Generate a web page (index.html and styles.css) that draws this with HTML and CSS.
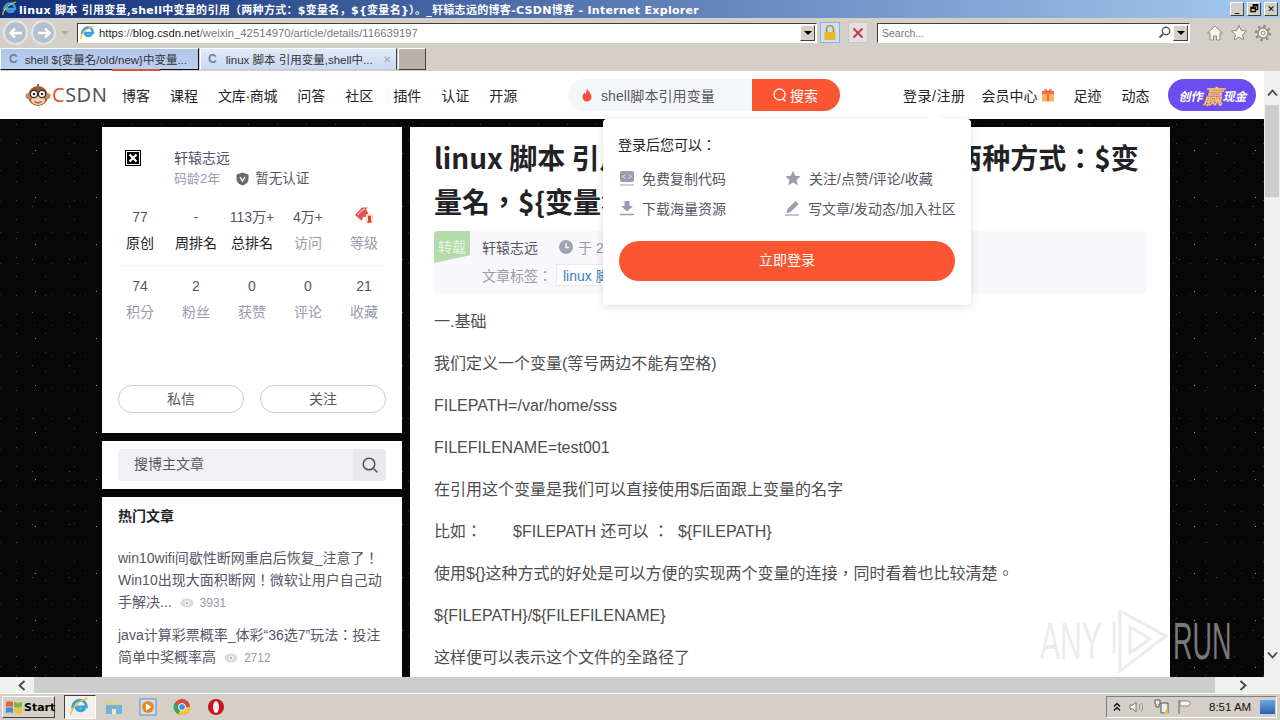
FILE: index.html
```html
<!DOCTYPE html>
<html>
<head>
  <meta charset="UTF-8" />
  <title>linux 脚本 引用变量 - CSDN博客</title>
  <link rel="stylesheet" href="styles.css">
</head>
<body>

  <!-- Window title -->
  <div class="titlebar">
    <svg class="ie-logo" width="16" height="16" viewBox="0 0 16 16"><path d="M2 9c0-4 3-6.500 6-6.500 3 0 5 2.500 5 5.500H5c0 3 4 4 7 1.500" fill="none" stroke="#3a9fe0" stroke-width="2.400"/><path d="M1 14C0 11 6 3 14 1" fill="none" stroke="#f2c230" stroke-width="1.200"/></svg>
    <span class="titlebar-text">linux 脚本 引用变量,shell中变量的引用（两种方式：$变量名，${变量名}）。_轩辕志远的博客-CSDN博客 - Internet Explorer</span>
    <div class="win-btns">
      <span class="win-btn">_</span><span class="win-btn">🗗</span><span class="win-btn">✕</span>
    </div>
  </div>

  <!-- Address row -->
  <div class="addressbar">
    <div class="nav-round"><svg width="14" height="12" viewBox="0 0 14 12"><path d="M13 6H2M6 1.500 1.500 6 6 10.500" fill="none" stroke="#fff" stroke-width="2.400"/></svg></div>
    <div class="nav-round"><svg width="14" height="12" viewBox="0 0 14 12"><path d="M1 6h11M8 1.500 12.500 6 8 10.500" fill="none" stroke="#fff" stroke-width="2.400"/></svg></div>
    <span class="nav-drop"></span>
    <div class="url-box">
      <svg width="16" height="16" viewBox="0 0 16 16"><path d="M2 9c0-4 3-6.500 6-6.500 3 0 5 2.500 5 5.500H5c0 3 4 4 7 1.500" fill="none" stroke="#3a9fe0" stroke-width="2.400"/><path d="M1 14C0 11 6 3 14 1" fill="none" stroke="#f2c230" stroke-width="1.200"/></svg>
      <span class="url-text"><b>https</b>://<b>blog.csdn.net</b>/weixin_42514970/article/details/116639197</span>
      <span class="combo-arrow"></span>
    </div>
    <div class="lock-btn"><svg width="14" height="16" viewBox="0 0 14 16"><path d="M3.500 7V4a3.500 3.500 0 0 1 7 0v3" fill="none" stroke="#b98a20" stroke-width="1.600"/><rect x="1.500" y="7" width="11" height="8" fill="#e8b830"/></svg></div>
    <div class="stop-btn"><svg width="12" height="12" viewBox="0 0 12 12"><path d="M1.500 1.500l9 9M10.500 1.500l-9 9" stroke="#c04048" stroke-width="2"/></svg></div>
    <div class="search-box">
      <span>Search...</span>
      <svg width="13" height="13" viewBox="0 0 13 13"><circle cx="8" cy="5" r="3.700" fill="none" stroke="#555" stroke-width="1.400"/><path d="M5 8 1.500 11.500" stroke="#555" stroke-width="1.800"/></svg>
      <span class="combo-arrow"></span>
    </div>
    <div class="tool-icons">
      <svg width="18" height="18" viewBox="0 0 18 18"><path d="M9 2 1.500 9H4v7h3.500v-4h3v4H14V9h2.500z" fill="#f6f4f0" stroke="#8b8b85"/></svg>
      <svg width="18" height="18" viewBox="0 0 18 18"><path d="M9 1.500l2.300 5 5.200.5-4 3.600 1.200 5.400L9 13.200 4.300 16l1.200-5.400-4-3.600 5.200-.5z" fill="#f6f4f0" stroke="#8b8b85"/></svg>
      <svg width="18" height="18" viewBox="0 0 18 18"><circle cx="9" cy="9" r="5" fill="#f6f4f0" stroke="#8b8b85" stroke-width="1.500"/><circle cx="9" cy="9" r="7" fill="none" stroke="#8b8b85" stroke-width="2.400" stroke-dasharray="2.500 3"/><circle cx="9" cy="9" r="2" fill="none" stroke="#8b8b85"/></svg>
    </div>
  </div>

  <!-- Tabs -->
  <div class="tabstrip">
    <div class="tab">
      <span class="tab-spin">C</span>
      <span class="tab-label">shell ${变量名/old/new}中变量...</span>
    </div>
    <div class="tab tab-active">
      <span class="tab-spin">C</span>
      <span class="tab-label">linux 脚本 引用变量,shell中...</span>
      <span class="tab-close">✕</span>
    </div>
    <div class="tab-new"></div>
    <span class="tab-progress"></span>
  </div>

  <!-- Browser viewport -->
  <div class="viewport">
    <div class="page">

      <div class="site-header">
        <div class="logo">
          <svg width="26" height="24" viewBox="0 0 26 24">
            <circle cx="13" cy="13" r="10" fill="#9c5a36"/>
            <circle cx="3.500" cy="13" r="3" fill="#c98a5c"/>
            <circle cx="22.500" cy="13" r="3" fill="#c98a5c"/>
            <ellipse cx="13" cy="17" rx="7" ry="5" fill="#f2cfa8"/>
            <circle cx="9" cy="11" r="3.600" fill="#fff" stroke="#3c2a20" stroke-width="1.300"/>
            <circle cx="17" cy="11" r="3.600" fill="#fff" stroke="#3c2a20" stroke-width="1.300"/>
            <circle cx="9" cy="11" r="1.300" fill="#3c2a20"/>
            <circle cx="17" cy="11" r="1.300" fill="#3c2a20"/>
            <path d="M9.500 18.500c2 1.500 5 1.500 7 0" fill="none" stroke="#a0482c" stroke-width="1.200"/>
            <path d="M13 3V1" stroke="#9c5a36" stroke-width="2"/>
          </svg>
          <span class="logo-text"><span class="logo-c">C</span>SDN</span>
        </div>
        <nav class="site-nav">
          <a>博客</a><a>课程</a><a class="nav-shop">文库·商城</a><a>问答</a><a>社区</a><a>插件</a><a>认证</a><a>开源</a>
        </nav>
        <div class="site-search">
          <div class="site-search-input">
            <svg width="12" height="14" viewBox="0 0 12 14"><path d="M6 .5c.5 2.500 4.500 4.500 4.500 8.500A4.500 4.500 0 0 1 6 13.500 4.500 4.500 0 0 1 1.500 9C1.500 7 2.500 5.500 3.500 4.500c.3 1 .7 1.500 1.200 1.800C5.200 4.500 5.500 2.500 6 .5z" fill="#f0503c"/></svg>
            <span>shell脚本引用变量</span>
          </div>
          <div class="site-search-btn">
            <svg width="16" height="16" viewBox="0 0 16 16"><circle cx="7.500" cy="7.500" r="5.500" fill="none" stroke="#fff" stroke-width="1.300"/><path d="M11 11.500l2.500 3" stroke="#fff" stroke-width="1.300"/></svg>
            <span>搜索</span>
          </div>
        </div>
        <div class="site-right">
          <a class="r-login">登录/注册</a>
          <a class="r-vip">会员中心
            <svg width="14" height="14" viewBox="0 0 14 14"><rect x="1" y="5" width="12" height="8.500" fill="#f5b35a"/><rect x="1" y="3" width="12" height="3" fill="#ef6f4c"/><rect x="6" y="3" width="2" height="10.500" fill="#ef6f4c"/><path d="M7 3C5 0 2.500 .5 3.500 3zM7 3c2-3 4.500-2.500 3.500 0z" fill="#ef6f4c"/></svg>
          </a>
          <a class="r-foot">足迹</a>
          <a class="r-news">动态</a>
          <div class="r-pill"><i>创作</i><i class="r-pill-win">赢</i><i>现金</i></div>
        </div>
      </div>

      <div class="page-body">
        <aside class="sidebar">
          <section class="card profile">
            <div class="profile-top">
              <span class="broken-img"><svg width="10" height="10" viewBox="0 0 10 10"><path d="M1.500 1.500l7 7M8.500 1.500l-7 7" stroke="#fff" stroke-width="2.200"/></svg></span>
              <div class="profile-info">
                <div class="profile-name">轩辕志远</div>
                <div class="profile-sub">
                  <span class="profile-age">码龄2年</span>
                  <svg width="13" height="14" viewBox="0 0 13 14"><path d="M6.500 .5 12.500 2.500V7c0 3.500-3 5.500-6 6.500-3-1-6-3-6-6.500V2.500z" fill="#6b6b6b"/><path d="M4 5l2.500 4L9 5" fill="none" stroke="#fff" stroke-width="1.300"/></svg>
                  <span class="profile-cert">暂无认证</span>
                </div>
              </div>
            </div>
            <div class="stats stats-first">
              <div class="stat"><b>77</b><span class="dark">原创</span></div>
              <div class="stat"><b>-</b><span class="dark">周排名</span></div>
              <div class="stat"><b>113万+</b><span class="dark">总排名</span></div>
              <div class="stat"><b>4万+</b><span>访问</span></div>
              <div class="stat">
                <b class="level-icon"><svg width="20" height="18" viewBox="0 0 20 18"><path d="M1 9 8 1.500h6L12 3l3 6-2 2H9l-1 4z" fill="#ec5050"/><path d="M4 9c2-3 4-5 7-6" fill="none" stroke="#fff" stroke-width="1"/><rect x="12" y="8" width="7" height="9" fill="#fbe3c8"/><path d="M14.500 10h2v6h-2zM13 16h5" stroke="#d8452c" stroke-width="1" fill="#d8452c"/></svg></b>
                <span>等级</span>
              </div>
            </div>
            <div class="stats-line"></div>
            <div class="stats stats-second">
              <div class="stat"><b>74</b><span>积分</span></div>
              <div class="stat"><b>2</b><span>粉丝</span></div>
              <div class="stat"><b>0</b><span>获赞</span></div>
              <div class="stat"><b>0</b><span>评论</span></div>
              <div class="stat"><b>21</b><span>收藏</span></div>
            </div>
            <div class="profile-btns">
              <a>私信</a><a>关注</a>
            </div>
          </section>

          <section class="card blog-search">
            <div class="blog-search-box">
              <span class="blog-search-text">搜博主文章</span>
              <span class="blog-search-btn"><svg width="18" height="18" viewBox="0 0 18 18"><circle cx="8" cy="8" r="5.800" fill="none" stroke="#555" stroke-width="1.500"/><path d="M12.500 12.500l4 4" stroke="#555" stroke-width="1.500"/></svg></span>
            </div>
          </section>

          <section class="card hot">
            <h4>热门文章</h4>
            <div class="hot-item">win10wifi间歇性断网重启后恢复_注意了！Win10出现大面积断网！微软让用户自己动手解决... <span class="hot-views"><svg width="14" height="10" viewBox="0 0 14 10"><ellipse cx="7" cy="5" rx="6.500" ry="4.500" fill="#d8dbe2"/><circle cx="7" cy="5" r="2.400" fill="#fff"/><circle cx="7" cy="5" r="1.300" fill="#a9afbd"/></svg>3931</span></div>
            <div class="hot-item">java计算彩票概率_体彩“36选7”玩法：投注简单中奖概率高 <span class="hot-views"><svg width="14" height="10" viewBox="0 0 14 10"><ellipse cx="7" cy="5" rx="6.500" ry="4.500" fill="#d8dbe2"/><circle cx="7" cy="5" r="2.400" fill="#fff"/><circle cx="7" cy="5" r="1.300" fill="#a9afbd"/></svg>2712</span></div>
          </section>
        </aside>

        <main class="article">
          <h1>linux 脚本 引用变量,shell中变量的引用（两种方式：$变量名，${变量名}）。</h1>
          <div class="article-meta">
            <span class="badge">转载</span>
            <div class="meta-line">
              <span class="meta-author">轩辕志远</span>
              <svg width="14" height="14" viewBox="0 0 14 14"><circle cx="7" cy="7" r="7" fill="#a0a3b5"/><path d="M7 3v4.500h3" fill="none" stroke="#fff" stroke-width="1.300"/></svg>
              <span class="meta-date">于 2021-05-11 发布</span>
            </div>
            <div class="meta-line">
              <span class="meta-label">文章标签：</span>
              <span class="meta-tag">linux 脚本</span>
            </div>
          </div>
          <p>一.基础</p>
          <p>我们定义一个变量(等号两边不能有空格)</p>
          <p>FILEPATH=/var/home/sss</p>
          <p>FILEFILENAME=test001</p>
          <p>在引用这个变量是我们可以直接使用$后面跟上变量的名字</p>
          <p>比如：&nbsp; &nbsp; &nbsp; &nbsp;$FILEPATH 还可以 ：&nbsp; ${FILEPATH}</p>
          <p>使用${}这种方式的好处是可以方便的实现两个变量的连接，同时看着也比较清楚。</p>
          <p>${FILEPATH}/${FILEFILENAME}</p>
          <p>这样便可以表示这个文件的全路径了</p>
        </main>
      </div>

      <!-- Login popup under the header -->
      <div class="login-pop">
        <div class="login-pop-title">登录后您可以：</div>
        <div class="login-pop-grid">
          <div class="pop-item">
            <svg width="14" height="16" viewBox="0 0 14 16"><rect x="0" y="1" width="14" height="11" rx="2" fill="#9a9db0"/><path d="M0 15h14" stroke="#9a9db0"/><path d="M5 4.500 3 6.500l2 2M9 4.500l2 2-2 2" fill="none" stroke="#fff"/></svg>
            <span>免费复制代码</span>
          </div>
          <div class="pop-item">
            <svg width="16" height="16" viewBox="0 0 16 16"><path d="M8 .8l2.300 4.900 5.200.6-3.900 3.600 1.100 5.300L8 12.500l-4.700 2.700 1.100-5.300L.5 6.300l5.200-.6z" fill="#9a9db0"/></svg>
            <span>关注/点赞/评论/收藏</span>
          </div>
          <div class="pop-item">
            <svg width="14" height="16" viewBox="0 0 14 16"><path d="M4.500 1h5v5H13L7 11.500 1 6h3.500z" fill="#9a9db0"/><path d="M0 14.500h14" stroke="#9a9db0" stroke-width="1.500"/></svg>
            <span>下载海量资源</span>
          </div>
          <div class="pop-item pop-write">
            <svg width="14" height="16" viewBox="0 0 14 16"><path d="M10.500 1 13.500 4 5.500 12 1.500 13.500 2.500 9z" fill="#9a9db0"/><path d="M0 15h14" stroke="#9a9db0" stroke-width="1.200"/></svg>
            <span>写文章/发动态/加入社区</span>
          </div>
        </div>
        <div class="login-pop-btn">立即登录</div>
      </div>
    </div>

    <div class="v-scroll">
      <span class="v-arrow"><svg width="11" height="8" viewBox="0 0 11 8"><path d="M1 6.500l4.500-5 4.500 5" fill="none" stroke="#444" stroke-width="1.800"/></svg></span>
      <span class="v-thumb"></span>
      <span class="v-arrow v-arrow-down"><svg width="11" height="8" viewBox="0 0 11 8"><path d="M1 1.500l4.500 5 4.500-5" fill="none" stroke="#444" stroke-width="1.800"/></svg></span>
    </div>
  </div>

  <div class="h-scroll">
    <span class="h-arrow h-left"><svg width="8" height="11" viewBox="0 0 8 11"><path d="M6.500 1l-5 4.500 5 4.500" fill="none" stroke="#444" stroke-width="1.800"/></svg></span>
    <span class="h-thumb"></span>
    <span class="h-arrow h-right"><svg width="8" height="11" viewBox="0 0 8 11"><path d="M1.500 1l5 4.500-5 4.500" fill="none" stroke="#444" stroke-width="1.800"/></svg></span>
  </div>

  <!-- Taskbar -->
  <div class="taskbar">
    <div class="start-btn">
      <svg width="18" height="16" viewBox="0 0 18 16"><path d="M1 3c2-1 4-1 7 0v5C5 7 3 7 1 8z" fill="#e8602c"/><path d="M9 3c3 1 5 1 8 0v5c-3 1-5 1-8 0z" fill="#7eb73e"/><path d="M1 9c2-1 4-1 7 0v5c-3-1-5-1-7 0z" fill="#3f8fd8"/><path d="M9 9c3 1 5 1 8 0v5c-3 1-5 1-8 0z" fill="#f2c230"/></svg>
      <span>Start</span>
    </div>
    <div class="task-item task-item-on">
      <svg width="20" height="20" viewBox="0 0 16 16"><path d="M2 9c0-4 3-6.500 6-6.500 3 0 5 2.500 5 5.500H5c0 3 4 4 7 1.500" fill="none" stroke="#3a9fe0" stroke-width="2.400"/><path d="M1 14C0 11 6 3 14 1" fill="none" stroke="#f2c230" stroke-width="1.200"/></svg>
    </div>
    <div class="task-item">
      <svg width="18" height="18" viewBox="0 0 18 18"><path d="M2 3h5l2 2h6v3H2z" fill="#e6cf7e"/><path d="M1 7h16v9H1z" fill="#72b4d8"/><path d="M7 16v-5h4v5" fill="#f4e9c0"/></svg>
    </div>
    <div class="task-item">
      <svg width="18" height="18" viewBox="0 0 18 18"><rect x="1" y="1" width="16" height="16" fill="#cfe2f5" stroke="#5a8fc8"/><circle cx="9" cy="9" r="6" fill="#ee8a1c"/><path d="M7 5.500 12.500 9 7 12.500z" fill="#fff"/></svg>
    </div>
    <div class="task-item">
      <svg width="18" height="18" viewBox="0 0 18 18"><circle cx="9" cy="9" r="8" fill="#d9483b"/><path d="M9 9 17 9A8 8 0 0 1 5 16z" fill="#f5c431"/><path d="M9 9 5 16A8 8 0 0 1 1.500 5z" fill="#3ba55c"/><circle cx="9" cy="9" r="3.500" fill="#4a8af0" stroke="#fff"/></svg>
    </div>
    <div class="task-item">
      <svg width="18" height="18" viewBox="0 0 18 18"><circle cx="9" cy="9" r="8" fill="#c8141c"/><ellipse cx="9" cy="9" rx="3" ry="6" fill="#f0f0f0"/></svg>
    </div>
    <div class="tray">
      <svg width="8" height="10" viewBox="0 0 8 10"><path d="M1 4.500 4 1.500l3 3M1 8.500l3-3 3 3" fill="none" stroke="#111" stroke-width="1.400"/></svg>
      <svg width="16" height="14" viewBox="0 0 16 14"><path d="M1 5h3l3-3v10L4 9H1z" fill="#eee" stroke="#777"/><path d="M10 4c1 2 1 4 0 6M12.500 2.500c1.500 3 1.500 6 0 9" fill="none" stroke="#999"/></svg>
      <svg width="16" height="16" viewBox="0 0 16 16"><path d="M2 1h5v4H6v3H3V5H2z" fill="#eee" stroke="#555"/><path d="M8 4h7v10H8z" fill="#eee" stroke="#555"/><path d="M11 15l2.500-5 2.500 5z" fill="#f2c230"/></svg>
      <svg width="16" height="16" viewBox="0 0 16 16"><path d="M2 1v14" stroke="#666"/><path d="M3 2h8l3 2.500L11 7H3z" fill="#f4f4f4" stroke="#888"/></svg>
      <span class="tray-time">8:51 AM</span>
      <span class="show-desktop"></span>
    </div>
  </div>

  <!-- Sandbox watermark -->
  <div class="watermark">
    <span class="wm-text">ANY</span>
    <svg width="58" height="64" viewBox="0 0 58 64"><path d="M8 2 54 27 8 62zM18 18v26l20-14z" fill="none" stroke="currentColor" stroke-width="3"/><path d="M2 12v32" fill="none" stroke="currentColor" stroke-width="3"/></svg>
    <span class="wm-text wm-run">RUN</span>
  </div>

</body>
</html>
```

FILE: styles.css
```css
* {
  box-sizing: border-box;
}

html, body {
  margin: 0;
  height: 720px;
  overflow: hidden;
}

body {
  font-family: "Liberation Sans", "Noto Sans CJK TC", sans-serif;
  background: #d4d0c8;
  display: flex;
  flex-direction: column;
  position: relative;
}

svg {
  flex-shrink: 0;
}

/* Title bar */
.titlebar {
  height: 18px;
  display: flex;
  align-items: center;
  background: linear-gradient(to right, #12307a, #a6caf0);
  color: #fff;
  font-family: "DejaVu Sans", "Noto Sans CJK SC", sans-serif;
  font-size: 11px;
  font-weight: bold;
  letter-spacing: .3px;
  padding-left: 2px;
}

.ie-logo {
  margin-right: 1px;
}

.titlebar-text {
  flex: 1;
  white-space: nowrap;
  overflow: hidden;
}

.win-btns {
  display: flex;
  gap: 3px;
  padding-right: 2px;
}

.win-btn {
  width: 14px;
  height: 14px;
  background: #d4d0c8;
  color: #000;
  font-size: 9px;
  line-height: 13px;
  text-align: center;
  letter-spacing: 0;
  border: 1px solid;
  border-color: #fff #404040 #404040 #fff;
}

/* Address row */
.addressbar {
  height: 29px;
  display: flex;
  align-items: center;
  padding-left: 3px;
  background: #d4d0c8;
}

.nav-round {
  width: 25px;
  height: 25px;
  margin-right: 3px;
  border-radius: 50%;
  background: #b4c0d0;
  border: 2px solid #e2e6ea;
  display: flex;
  align-items: center;
  justify-content: center;
}

.nav-drop {
  width: 0;
  height: 0;
  margin: 0 8px 0 2px;
  border-left: 4px solid transparent;
  border-right: 4px solid transparent;
  border-top: 4px solid #a8a8a8;
}

.url-box {
  width: 740px;
  height: 20px;
  display: flex;
  align-items: center;
  gap: 3px;
  padding-left: 2px;
  background: #fff;
  border: 1px solid;
  border-color: #404040 #fff #fff #404040;
}

.url-text {
  flex: 1;
  font-size: 11.250px;
  color: #777;
  white-space: nowrap;
}

.url-text b {
  font-weight: normal;
  color: #222;
}

.combo-arrow {
  width: 15px;
  height: 16px;
  margin-right: 1px;
  background: #d4d0c8;
  border: 1px solid;
  border-color: #fff #404040 #404040 #fff;
  position: relative;
}

.combo-arrow::after {
  content: "";
  position: absolute;
  left: 3px;
  top: 5px;
  border-left: 4px solid transparent;
  border-right: 4px solid transparent;
  border-top: 4px solid #000;
}

.lock-btn {
  width: 20px;
  height: 21px;
  margin-left: 3px;
  background: #cfe0f2;
  border: 1px solid #8fb2d8;
  display: flex;
  align-items: center;
  justify-content: center;
}

.stop-btn {
  width: 20px;
  height: 21px;
  margin-left: 8px;
  background: #e3dfe0;
  border: 1px solid #c8c8c8;
  display: flex;
  align-items: center;
  justify-content: center;
}

.search-box {
  width: 313px;
  height: 20px;
  margin-left: 9px;
  display: flex;
  align-items: center;
  gap: 2px;
  padding-left: 4px;
  background: #fff;
  border: 1px solid;
  border-color: #404040 #fff #fff #404040;
  font-size: 10.500px;
  color: #777;
}

.search-box span:first-child {
  flex: 1;
}

.tool-icons {
  display: flex;
  gap: 6px;
  margin-left: 16px;
}

/* Tabs */
.tabstrip {
  height: 24px;
  display: flex;
  align-items: flex-end;
  padding-bottom: 1px;
  gap: 1px;
  background: #d4d0c8;
  position: relative;
}

.tab {
  width: 199px;
  height: 22px;
  display: flex;
  align-items: center;
  gap: 7px;
  padding-left: 8px;
  background: linear-gradient(#b0c6ec, #bccff0);
  border: 1px solid;
  border-color: #fff #111 #111 #fff;
  font-size: 11.500px;
  color: #333;
  white-space: nowrap;
  overflow: hidden;
}

.tab-active {
  width: 197px;
  gap: 9px;
  padding-left: 7px;
  background: linear-gradient(#e2eaf8, #c9d8f2);
  border-color: #fff #404040 #c0cce0 #fff;
}

.tab-spin {
  color: #6b7f9c;
  font-weight: bold;
  font-size: 12px;
}

.tab-close {
  color: #9aa3b0;
  font-size: 10px;
  margin-left: auto;
  margin-right: 5px;
}

.tab-new {
  width: 28px;
  height: 22px;
  background: #b9b2a8;
  border: 1px solid;
  border-color: #fff #404040 #404040 #fff;
}

.tab-progress {
  position: absolute;
  left: 112px;
  bottom: 0;
  width: 48px;
  height: 2px;
  background: #d8573c;
}

/* Viewport */
.viewport {
  flex: 1;
  min-height: 0;
  display: flex;
  background: #fff;
}

.page {
  flex: 1;
  min-width: 0;
  position: relative;
  overflow: hidden;
  background-color: #070707;
  background-image:
    radial-gradient(circle, rgba(255,255,255,.55) .5px, transparent 1px),
    radial-gradient(circle, rgba(200,210,230,.35) .5px, transparent 1px),
    radial-gradient(circle, rgba(200,210,230,.28) .5px, transparent 1px),
    radial-gradient(circle, rgba(200,210,230,.2) .5px, transparent 1px);
  background-size: 61px 47px, 37px 53px, 29px 19px, 17px 31px;
  background-position: 5px 9px, 14px 3px, 2px 6px, 9px 22px;
}

.site-header {
  height: 48px;
  display: flex;
  align-items: center;
  background: #fff;
  color: #222226;
  font-size: 14px;
}

.logo {
  width: 97px;
  margin-left: 25px;
  display: flex;
  align-items: center;
  gap: 1px;
}

.logo-text {
  font-family: "Noto Sans", sans-serif;
  font-size: 20px;
  line-height: 24px;
  color: #555;
  letter-spacing: .5px;
}

.logo-c {
  color: #e5532d;
}

.site-nav {
  width: 446px;
  display: flex;
  gap: 20px;
  white-space: nowrap;
}

.nav-shop {
  letter-spacing: -.3px;
}

.site-search {
  width: 272px;
  height: 32px;
  display: flex;
}

.site-search-input {
  width: 184px;
  display: flex;
  align-items: center;
  gap: 8px;
  padding-left: 13px;
  background: #f5f6f7;
  border-radius: 16px 0 0 16px;
  color: #555666;
  letter-spacing: .1px;
}

.site-search-btn {
  flex: 1;
  display: flex;
  align-items: center;
  gap: 2px;
  padding-left: 20px;
  background: #fc5531;
  border-radius: 0 16px 16px 0;
  color: #fff;
}

.site-right {
  flex: 1;
  display: flex;
  align-items: center;
  padding-left: 63px;
  white-space: nowrap;
}

.r-login {
  letter-spacing: .5px;
}

.r-vip {
  display: flex;
  align-items: center;
  gap: 4px;
  margin-left: 16px;
}

.r-foot {
  margin-left: 18px;
}

.r-news {
  margin-left: 20px;
}

.r-pill {
  width: 88px;
  height: 32px;
  margin-left: 19px;
  border-radius: 16px;
  background: #6b4df0;
  color: #fff;
  display: flex;
  align-items: center;
  justify-content: center;
  font-size: 12px;
  font-weight: bold;
}

.r-pill-win {
  color: #ffc55a;
  font-size: 20px;
}

/* Page body */
.page-body {
  display: flex;
  gap: 8px;
  padding: 8px 0 0 102px;
}

.sidebar {
  width: 300px;
  display: flex;
  flex-direction: column;
  gap: 8px;
}

.card {
  background: #fff;
}

.profile {
  height: 306px;
  padding: 23px 16px 0;
}

.profile-top {
  display: flex;
  padding-left: 7px;
}

.broken-img {
  width: 16px;
  height: 16px;
  background: #000;
  border: 1px solid #000;
  outline: 1px solid #fff;
  outline-offset: -2px;
  display: flex;
  align-items: center;
  justify-content: center;
}

.profile-info {
  margin-left: 33px;
}

.profile-name {
  font-size: 14px;
  line-height: 17px;
  color: #555666;
}

.profile-sub {
  display: flex;
  align-items: center;
  font-size: 13px;
  line-height: 19px;
  margin-top: 2px;
}

.profile-age {
  color: #999aaa;
  margin-right: 16px;
}

.profile-cert {
  margin-left: 6px;
  font-size: 13.500px;
  color: #555666;
}

.stats {
  display: grid;
  grid-template-columns: repeat(5, 56px);
  margin: 0 0 0 -6px;
  text-align: center;
  font-size: 14px;
}

.stats-first {
  margin-top: 18px;
  padding-bottom: 11px;
}

.stats-line {
  height: 1px;
  margin: 0 2px;
  background: #f0f0f5;
}

.stats-second {
  padding-top: 9px;
}

.stat b {
  display: block;
  height: 22px;
  line-height: 22px;
  font-weight: normal;
  color: #555666;
  white-space: nowrap;
}

.stat span {
  display: block;
  margin-top: 4px;
  line-height: 22px;
  color: #999aaa;
  white-space: nowrap;
}

.stat span.dark {
  color: #222226;
}

.level-icon svg {
  display: block;
  margin: 0 auto;
}

.profile-btns {
  display: flex;
  gap: 16px;
  margin-top: 62px;
}

.profile-btns a {
  flex: 1;
  height: 28px;
  border: 1px solid #ccccd8;
  border-radius: 14px;
  text-align: center;
  font-size: 14px;
  line-height: 26px;
  color: #555666;
}

.blog-search {
  height: 48px;
  padding: 8px 16px;
}

.blog-search-box {
  height: 32px;
  display: flex;
  background: #f0f0f5;
  border-radius: 4px;
  font-size: 14px;
  line-height: 30px;
  color: #555666;
}

.blog-search-text {
  flex: 1;
  padding-left: 16px;
}

.blog-search-btn {
  width: 33px;
  display: flex;
  align-items: center;
  justify-content: center;
  background: #e8e8ed;
  border-radius: 0 4px 4px 0;
}

.hot {
  flex: 1;
  padding: 0 16px;
  height: 200px;
}

.hot h4 {
  margin: 0;
  padding-top: 10px;
  font-size: 14px;
  line-height: 19px;
  color: #222226;
}

.hot-item {
  font-size: 14px;
  line-height: 22px;
  color: #555666;
  margin-bottom: 11px;
}

.hot h4 + .hot-item {
  margin-top: 21px;
  margin-bottom: 10px;
}

.hot-views {
  margin-left: 4px;
  font-size: 12px;
  color: #999aaa;
}

.hot-views svg {
  margin-right: 6px;
  vertical-align: -1px;
}

/* Article */
.article {
  width: 760px;
  height: 560px;
  padding: 8px 24px 0;
  background: #fff;
  color: #4d4d4d;
}

.article h1 {
  margin: 0;
  font-family: "Noto Sans CJK TC", sans-serif;
  font-size: 28px;
  line-height: 44px;
  color: #222226;
}

.article-meta {
  height: 62px;
  margin-top: 8px;
  padding: 5px 0 0 48px;
  background: #f8f8fc;
  position: relative;
  font-size: 14px;
  color: #555666;
}

.badge {
  position: absolute;
  left: 0;
  top: 0;
  width: 36px;
  height: 32px;
  padding-top: 5px;
  text-align: center;
  background: #b3dcaa;
  color: #e8f5e4;
  border-radius: 4px 0 0 0;
  clip-path: polygon(0 0, 100% 0, 100% 76%, 0 100%);
}

.meta-line {
  height: 22px;
  display: flex;
  align-items: center;
  margin-bottom: 6px;
}

.meta-date {
  margin-left: 5px;
  color: #999aaa;
}

.meta-line svg {
  margin-left: 21px;
}

.meta-label {
  color: #999aaa;
}

.meta-tag {
  margin-left: 4px;
  padding: 0 6px;
  background: #fff;
  border: 1px solid #eaeaef;
  color: #3a7fc0;
}

.article p {
  margin: 0 0 16px;
  font-size: 16px;
  line-height: 26px;
}

.article-meta + p {
  margin-top: 16px;
}

/* Login popup */
.login-pop {
  position: absolute;
  left: 603px;
  top: 48px;
  width: 368px;
  height: 186px;
  padding: 16px 15px 0;
  background: #fff;
  border-radius: 4px;
  box-shadow: 0 2px 8px rgba(0,0,0,.12);
  font-size: 14px;
  color: #555666;
}

.login-pop::before {
  content: "";
  position: absolute;
  left: 326px;
  top: -5px;
  width: 10px;
  height: 10px;
  background: #fff;
  transform: rotate(45deg);
}

.login-pop-title {
  line-height: 20px;
  color: #222226;
}

.login-pop-grid {
  display: grid;
  grid-template-columns: 165px 1fr;
  row-gap: 8px;
  margin-top: 12px;
}

.pop-item {
  height: 22px;
  display: flex;
  align-items: center;
  gap: 8px;
  padding-left: 2px;
  white-space: nowrap;
}

.pop-write {
  gap: 9px;
}

.login-pop-btn {
  width: 336px;
  height: 40px;
  margin: 22px 0 0 1px;
  border-radius: 20px;
  background: #fc5531;
  color: #fff;
  text-align: center;
  line-height: 38px;
}

/* Scrollbars */
.v-scroll {
  width: 16px;
  display: flex;
  flex-direction: column;
  align-items: center;
  padding-top: 13px;
  background: #f0f0f0;
}

.v-arrow {
  height: 18px;
  display: flex;
  align-items: center;
}

.v-thumb {
  width: 14px;
  height: 92px;
  margin-top: 3px;
  background: #cdcdcd;
}

.v-arrow-down {
  margin-top: auto;
  margin-bottom: 13px;
}

.h-scroll {
  height: 16px;
  display: flex;
  align-items: center;
  background: #fff;
}

.h-arrow {
  height: 16px;
  display: flex;
  align-items: center;
  background: #f0f0f0;
}

.h-left {
  width: 34px;
  padding-left: 18px;
}

.h-right {
  width: 65px;
  padding-left: 24px;
}

.h-thumb {
  flex: 1;
  height: 16px;
  background: #cdcdcd;
}

/* Taskbar */
.taskbar {
  height: 27px;
  display: flex;
  align-items: center;
  border-top: 1px solid #fff;
  background: #d4d0c8;
  padding: 0 3px 0 2px;
}

.start-btn {
  width: 53px;
  height: 22px;
  display: flex;
  align-items: center;
  gap: 1px;
  padding-left: 2px;
  margin-right: 9px;
  border: 1px solid;
  border-color: #fff #404040 #404040 #fff;
  font-family: "DejaVu Sans", sans-serif;
  font-size: 11px;
  font-weight: bold;
  color: #000;
}

.task-item {
  width: 32px;
  height: 24px;
  margin-right: 2px;
  display: flex;
  align-items: center;
  justify-content: center;
}

.task-item-on {
  background: #f2f0ea;
  border: 1px solid;
  border-color: #404040 #fff #fff #404040;
}

.tray {
  margin-left: auto;
  width: 171px;
  height: 22px;
  display: flex;
  align-items: center;
  gap: 8px;
  padding-left: 6px;
  border: 1px solid;
  border-color: #808080 #fff #fff #808080;
  font-size: 11px;
  color: #111;
}

.tray-time {
  margin-left: 8px;
  font-size: 11.500px;
  white-space: nowrap;
}

.show-desktop {
  width: 15px;
  height: 14px;
  margin-left: auto;
  margin-right: 1px;
  background: linear-gradient(#6aa8e8, #2a60b0);
}

/* Watermark */
.watermark {
  position: absolute;
  left: 1040px;
  top: 609px;
  height: 64px;
  display: flex;
  align-items: center;
  font-family: "Liberation Sans", sans-serif;
  font-size: 51px;
  color: rgba(220,220,220,.545);
  pointer-events: none;
}

.wm-text {
  display: inline-block;
  width: 72px;
  transform: scaleX(.59);
  transform-origin: left center;
  white-space: nowrap;
}

.wm-run {
  width: 60px;
  margin-left: 3px;
  transform: scaleX(.53);
}
```
